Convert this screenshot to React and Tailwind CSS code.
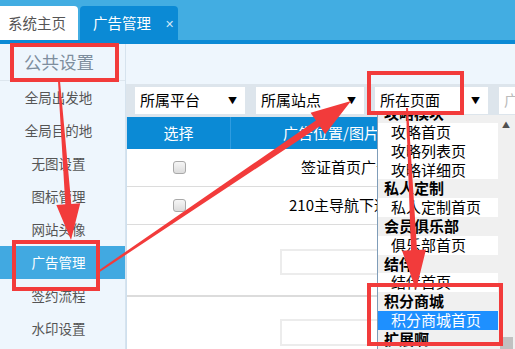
import React from 'react'

const SIDE = ['全局出发地', '全局目的地', '无图设置', '图标管理', '网站头像', '广告管理', '签约流程', '水印设置']

const OPTS = [
  { g: true, t: '攻略模块' },
  { t: '攻略首页' },
  { t: '攻略列表页' },
  { t: '攻略详细页' },
  { g: true, t: '私人定制' },
  { t: '私人定制首页' },
  { g: true, t: '会员俱乐部' },
  { t: '俱乐部首页' },
  { g: true, t: '结伴' },
  { t: '结伴首页' },
  { g: true, t: '积分商城' },
  { t: '积分商城首页', sel: true },
  { g: true, t: '扩展啊' },
]

// tapered red arrow, from start point to tip
function arrow(x0, y0, x1, y1, w0, w1, L, H) {
  const dx = x1 - x0, dy = y1 - y0
  const len = Math.hypot(dx, dy)
  const ux = dx / len, uy = dy / len
  const px = -uy, py = ux
  const bx = x1 - ux * L, by = y1 - uy * L
  const p = [
    [x0 + px * w0 / 2, y0 + py * w0 / 2],
    [bx + px * w1 / 2, by + py * w1 / 2],
    [bx + px * H, by + py * H],
    [x1, y1],
    [bx - px * H, by - py * H],
    [bx - px * w1 / 2, by - py * w1 / 2],
    [x0 - px * w0 / 2, y0 - py * w0 / 2],
  ]
  return p.map(q => q.join(',')).join(' ')
}

function Select({ label, w }) {
  return (
    <div className={`h-[27px] shrink-0 bg-white flex items-center justify-between pl-[5px] pr-[8px] text-[15px] text-black ${w}`}>
      <span>{label}</span>
      <span className="text-[9px]">▼</span>
    </div>
  )
}

function Checkbox() {
  return <div className="w-[13px] h-[13px] rounded-[3px] border border-[#a9a9a9] bg-linear-to-b from-[#f6f6f6] to-[#dcdcdc]" />
}

export default function App() {
  return (
    <div className="relative w-[515px] h-[349px] overflow-hidden bg-[#eef6fd] font-['Noto_Sans_CJK_SC',sans-serif]">
      {/* Tabs */}
      <div className="h-[40px] bg-[#42ade2] flex items-end">
        <div className="w-[78px] h-[34px] bg-white rounded-tr-[4px] flex items-center pl-[8px] text-[14.5px] text-[#555]">系统主页</div>
        <div className="ml-[2px] w-[98px] h-[34px] bg-[#0b8ad5] rounded-t-[4px] flex items-center pl-[13px] text-[14.5px] text-white">
          广告管理
          <span className="ml-[14px] text-[11px] text-[#cfe6f6]">✕</span>
        </div>
      </div>
      <div className="h-[4px] bg-[#0b8ad5]" />

      <div className="flex h-[305px]">
        {/* Sidebar */}
        <div className="w-[126px] shrink-0 border-r border-[#d6e3ee] flex flex-col">
          <div className="h-[37px] border-b border-[#dde6ee] flex items-center pl-[24px] text-[17.5px] text-[#7e8e9e]">公共设置</div>
          {SIDE.map(s => (
            <div key={s} className={`h-[33px] flex items-center justify-center pr-[8px] text-[13.5px] ${s === '广告管理' ? 'bg-[#41a9e1] text-white' : 'text-[#555]'}`}>{s}</div>
          ))}
        </div>

        {/* Main */}
        <div className="flex-1 min-w-0 flex flex-col">
          <div className="h-[40px]" />
          <div className="h-[33px] bg-[#dde5ec] flex items-center pl-[9px] gap-[11px]">
            <Select label="所属平台" w="w-[110px]" />
            <Select label="所属站点" w="w-[108px]" />
            <Select label="所在页面" w="w-[113px]" />
            <div className="h-[27px] flex-1 min-w-0 overflow-hidden whitespace-nowrap bg-white pl-[5px] flex items-center text-[15px] text-[#bbb]">广告名称</div>
          </div>
          <div className="flex-1 bg-white border-l border-[#cfe0ee]">
            <div className="h-[32px] bg-[#0b8ad5] flex text-white text-[15px]">
              <div className="w-[104px] shrink-0 border-r border-[#2f9ce0] flex items-center justify-center">选择</div>
              <div className="flex-1 flex items-center pl-[52px] whitespace-nowrap">广告位置/图片排序</div>
            </div>
            <div className="h-[38px] border-b border-[#dcdcdc] flex items-center text-[15px] text-black">
              <div className="w-[104px] shrink-0 flex justify-center"><Checkbox /></div>
              <div className="pl-[70px] whitespace-nowrap">签证首页广告位</div>
            </div>
            <div className="h-[38px] border-b border-[#dcdcdc] flex items-center text-[15px] text-black">
              <div className="w-[104px] shrink-0 flex justify-center"><Checkbox /></div>
              <div className="pl-[58px] whitespace-nowrap">210主导航下通栏广告</div>
            </div>
            <div className="h-[72px] border-b-2 border-[#dcdcdc] pt-[24px] pl-[153px]">
              <div className="w-[120px] h-[26px] border-2 border-[#ececec]" />
            </div>
            <div className="pt-[22px] pl-[153px]">
              <div className="w-[120px] h-[27px] border-2 border-[#ececec]" />
            </div>
          </div>
        </div>
      </div>

      {/* Open select list */}
      <div className="absolute left-[377px] top-[115px] w-[138px] h-[234px] border-l border-[#7f9db9] bg-[#f0f0f0] flex overflow-hidden">
        <div className="w-[120px] shrink-0 mt-[-10.8px] text-[15px] leading-[18.8px] text-black">
          {OPTS.map(o => (
            <div
              key={o.t}
              className={`h-[18.8px] whitespace-nowrap ${o.g ? 'pl-[6px] font-bold' : o.sel ? 'pl-[13px] bg-[#1e90ff] text-white' : 'pl-[13px] bg-white'}`}
            >
              {o.t}
            </div>
          ))}
        </div>
        <div className="w-[16px] flex flex-col items-center justify-between">
          <span className="text-[8px] text-[#505050] mt-[4px]">▲</span>
          <div className="w-[13px] h-[12px] bg-[#c1c1c1]" />
        </div>
      </div>

      {/* Annotations */}
      <svg className="absolute inset-0 pointer-events-none" width="515" height="349" viewBox="0 0 515 349">
        <g fill="none" stroke="#f23b3b" strokeWidth="4">
          <rect x="12" y="45" width="105" height="35" />
          <rect x="14" y="242" width="84" height="47" />
          <rect x="369" y="73" width="93" height="40" />
          <rect x="369" y="285" width="132" height="59" />
        </g>
        <g fill="#f23b3b">
          <polygon points={arrow(59, 81, 71, 240, 2, 6, 36, 12)} />
          <polygon points={arrow(98, 272, 351, 101, 2, 7, 40, 13)} />
          <polygon points={arrow(407, 108, 416, 290, 2, 6, 40, 12)} />
        </g>
      </svg>
    </div>
  )
}
